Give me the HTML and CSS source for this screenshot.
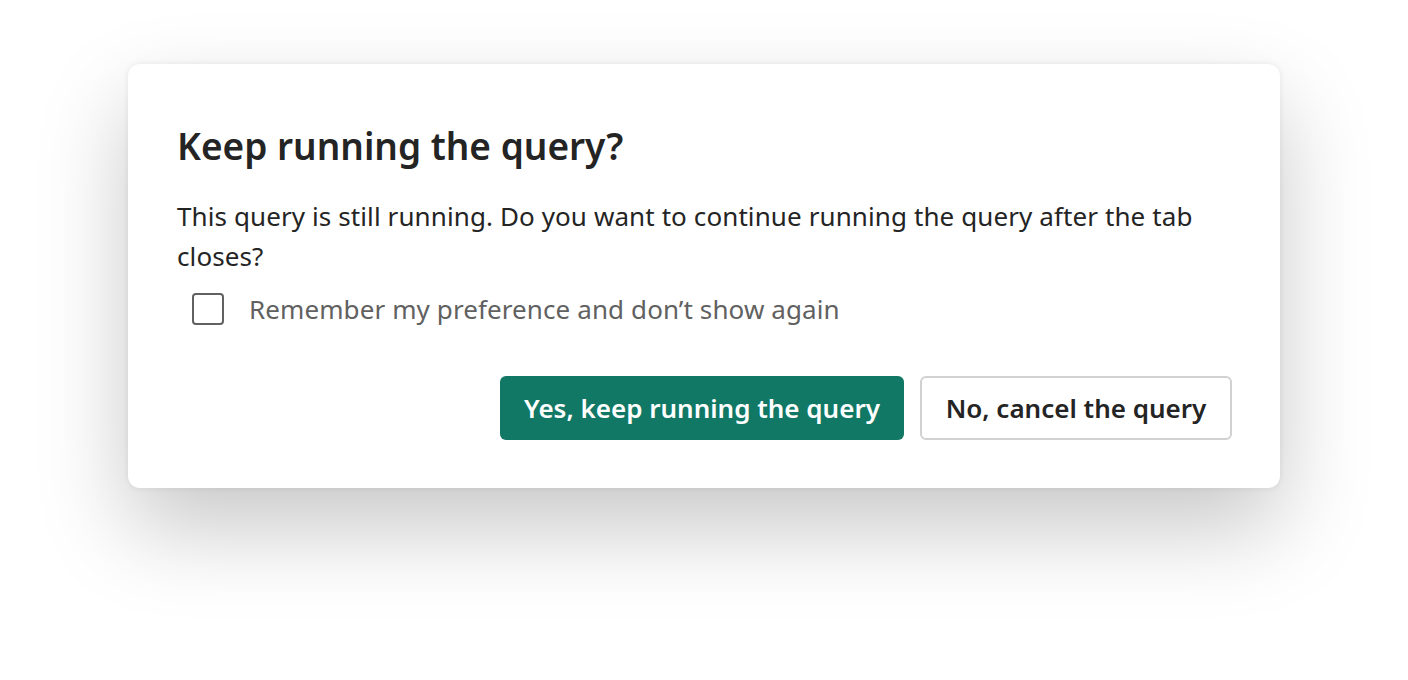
FILE: index.html
```html
<!DOCTYPE html>
<html lang="en">
<head>
    <meta charset="UTF-8">
    <meta name="viewport" content="width=device-width, initial-scale=1.0">
    <title>Keep running the query?</title>
    <link rel="stylesheet" href="styles.css">
</head>
<body>
    <div class="dialog">
        <h2 class="dialog-title">Keep running the query?</h2>
        <p class="dialog-text">This query is still running. Do you want to continue running the query after the tab closes?</p>
        <label class="remember">
            <span class="check-box"></span>
            <span class="remember-text">Remember my preference and don&rsquo;t show again</span>
        </label>
        <div class="actions">
            <button class="btn btn-primary">Yes, keep running the query</button>
            <button class="btn btn-secondary">No, cancel the query</button>
        </div>
    </div>
</body>
</html>
```

FILE: styles.css
```css
body {
    margin: 0;
    padding: 64px 128px 0 128px;
    background-color: #FFFFFF;
    font-family: "Noto Sans", "Open Sans", sans-serif;
    color: #242424;
    height: 680px;
    box-sizing: border-box;
}

.dialog {
    background-color: #FFFFFF;
    border-radius: 12px;
    padding: 48px 48px 48px 49px;
    height: 424px;
    box-sizing: border-box;
    box-shadow: 0 40px 90px rgba(0, 0, 0, 0.22), 0 0 6px rgba(0, 0, 0, 0.08);
}

.dialog-title {
    margin: 0;
    font-size: 37px;
    font-weight: 600;
    line-height: 68px;
}

.dialog-text {
    margin: 16px 0 0 0;
    font-size: 26px;
    line-height: 40px;
    letter-spacing: 0.1px;
    max-width: 1040px;
}

.remember {
    display: flex;
    align-items: center;
    margin-top: 9px;
    margin-left: 15px;
    height: 48px;
}

.check-box {
    width: 28px;
    height: 28px;
    border: 2px solid #616161;
    border-radius: 4px;
    flex-shrink: 0;
}

.remember-text {
    margin-left: 25px;
    font-size: 26px;
    color: #616161;
    letter-spacing: 0.1px;
}

.actions {
    display: flex;
    justify-content: flex-end;
    gap: 16px;
    margin-top: 43px;
}

.btn {
    height: 64px;
    font-family: "Noto Sans", "Open Sans", sans-serif;
    font-size: 26px;
    font-weight: 600;
    border-radius: 6px;
    padding: 0 12px;
    white-space: nowrap;
    cursor: pointer;
}

.btn-primary {
    background-color: #117865;
    color: #FFFFFF;
    border: none;
    width: 404px;
}

.btn-secondary {
    background-color: #FFFFFF;
    color: #242424;
    border: 2px solid #D1D1D1;
    width: 312px;
}
```
